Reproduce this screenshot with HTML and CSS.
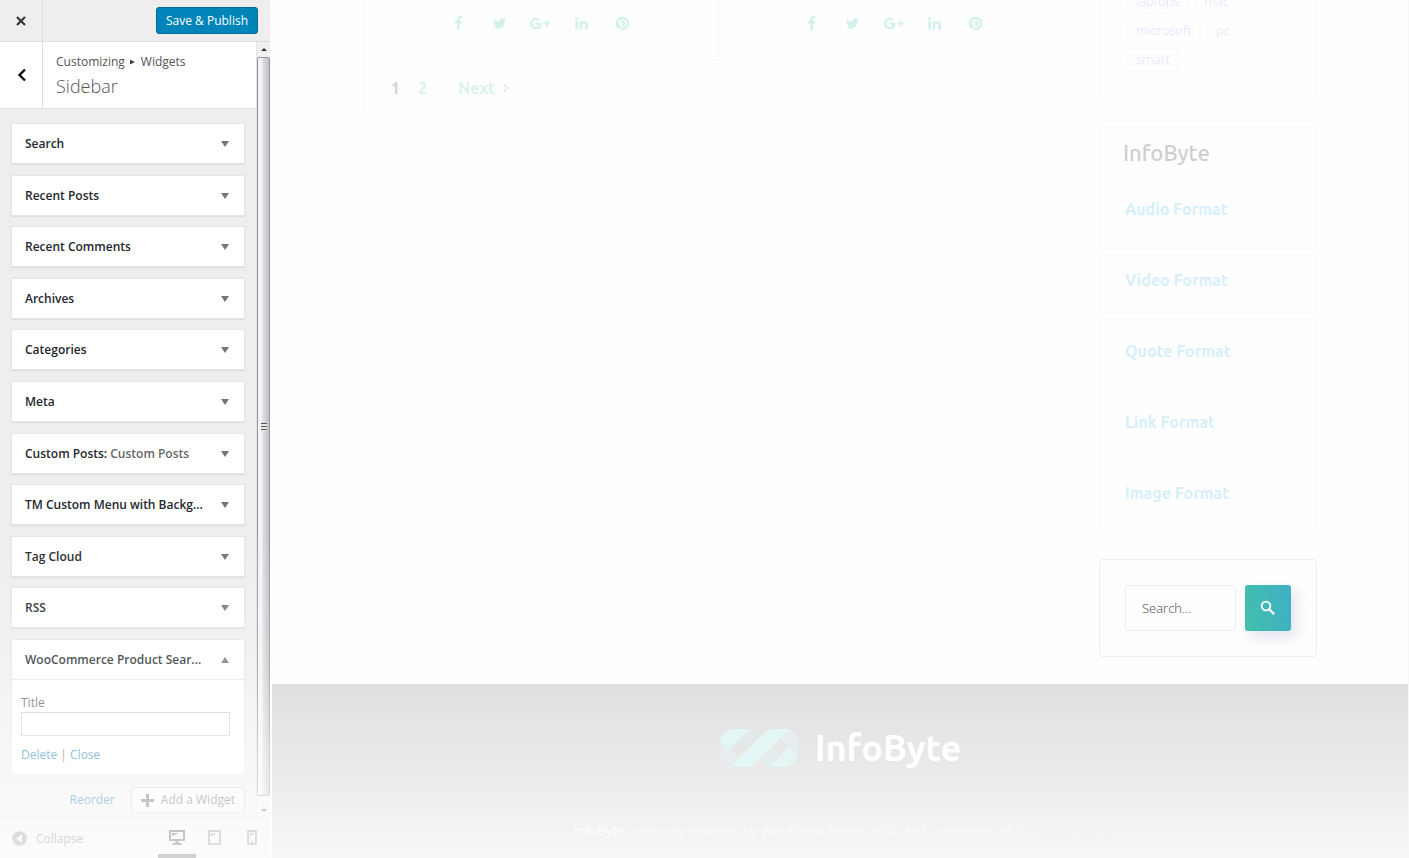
FILE: index.html
```html
<!DOCTYPE html>
<html lang="en">
<head>
<meta charset="utf-8">
<title>Customize: InfoByte</title>
<link rel="stylesheet" href="styles.css">
</head>
<body>
<svg width="0" height="0" class="sprite" aria-hidden="true">
  <symbol id="fb" viewBox="0 0 1792 1792"><path d="M1343 12v264h-157q-86 0-116 36t-30 108v189h293l-39 296h-254v759h-306v-759h-255v-296h255v-218q0-186 104-288.5t277-102.5q147 0 228 12z"/></symbol>
  <symbol id="tw" viewBox="0 0 1792 1792"><path d="M1684 408q-67 98-162 167 1 14 1 42 0 130-38 259.5t-115.5 248.5-184.5 210.5-258 146-323 54.5q-271 0-496-145 35 4 78 4 225 0 401-138-105-2-188-64.5t-114-159.5q33 5 61 5 43 0 85-11-112-23-185.5-111.5t-73.5-205.5v-4q68 38 146 41-66-44-105-115t-39-154q0-88 44-163 121 149 294.5 238.5t371.5 99.5q-8-38-8-74 0-134 94.5-228.5t228.5-94.5q140 0 236 102 109-21 205-78-37 115-142 178 93-10 186-50z"/></symbol>
  <symbol id="gp" viewBox="0 3 24 18"><path d="M7 11v2.4h3.97c-.16 1.03-1.2 3.02-3.97 3.02-2.39 0-4.34-1.98-4.34-4.42S4.61 7.58 7 7.58c1.36 0 2.27.58 2.79 1.08l1.9-1.83C10.47 5.69 8.89 5 7 5c-3.87 0-7 3.13-7 7s3.13 7 7 7c4.04 0 6.72-2.84 6.72-6.84 0-.46-.05-.81-.11-1.16zM24 13h-3v3h-2v-3h-3v-2h3V8h2v3h3z"/></symbol>
  <symbol id="li" viewBox="0 0 1792 1792"><path d="M477 625v991h-330v-991h330zm21-306q1 73-50.5 122t-135.5 49h-2q-82 0-132-49t-50-122q0-74 51.5-122.5t134.5-48.5 133 48.5 51 122.5zm1166 729v568h-329v-530q0-105-40.5-164.5t-126.5-59.5q-63 0-105.5 34.5t-63.5 85.5q-11 30-11 81v553h-329q2-399 2-647t-1-296l-1-48h329v144h-2q20-32 41-56t56.500-52 87-43.500 114.500-15.500q171 0 275 113.500t104 332.500z"/></symbol>
  <symbol id="pi" viewBox="1 1 22 22"><path d="M9.040 21.540c.96.29 1.930.46 2.960.46a10 10 0 0 0 10-10A10 10 0 0 0 12 2 10 10 0 0 0 2 12c0 4.250 2.670 7.900 6.440 9.340-.09-.78-.18-2.070 0-2.960l1.150-4.940s-.29-.58-.29-1.500c0-1.380.86-2.410 1.840-2.410.86 0 1.260.63 1.260 1.440 0 .86-.57 2.090-.86 3.270-.17.98.52 1.840 1.520 1.840 1.780 0 3.160-1.900 3.160-4.580 0-2.400-1.720-4.040-4.190-4.040-2.820 0-4.480 2.100-4.480 4.310 0 .86.28 1.730.74 2.300.09.06.09.14.06.29l-.29 1.090c0 .17-.11.23-.28.11-1.280-.56-2.020-2.380-2.020-3.850 0-3.160 2.240-6.030 6.560-6.030 3.440 0 6.120 2.470 6.120 5.750 0 3.440-2.130 6.200-5.180 6.200-.97 0-1.920-.52-2.260-1.130l-.67 2.370c-.23.86-.86 2.010-1.290 2.700z"/></symbol>
</svg>
<div class="app">
  <aside class="customizer">
    <header class="topbar">
      <button class="close" aria-label="Close"><svg width="12" height="12" viewBox="0 0 12 12"><path d="M2 2l8 8M10 2l-8 8" stroke="#32373c" stroke-width="2.200"/></svg></button>
      <button class="publish">Save &amp; Publish</button>
    </header>
    <div class="panel">
      <div class="controls">
        <div class="section-head">
          <button class="back" aria-label="Back"><svg width="12" height="14" viewBox="0 0 12 14"><path d="M10 1.500L4.500 7L10 12.500" fill="none" stroke="#111" stroke-width="2.400"/></svg></button>
          <div class="section-name">
            <div class="crumbs">Customizing <svg width="6" height="6" viewBox="0 0 6 6"><path d="M0 0.500l5 2.500l-5 2.500z" fill="#444"/></svg> Widgets</div>
            <h1>Sidebar</h1>
          </div>
        </div>
        <div class="widgets">
          <button class="widget"><span>Search</span><i class="arrow"></i></button>
          <button class="widget"><span>Recent Posts</span><i class="arrow"></i></button>
          <button class="widget"><span>Recent Comments</span><i class="arrow"></i></button>
          <button class="widget"><span>Archives</span><i class="arrow"></i></button>
          <button class="widget"><span>Categories</span><i class="arrow"></i></button>
          <button class="widget"><span>Meta</span><i class="arrow"></i></button>
          <button class="widget"><span>Custom Posts: <em>Custom Posts</em></span><i class="arrow"></i></button>
          <button class="widget"><span>TM Custom Menu with Backg...</span><i class="arrow"></i></button>
          <button class="widget"><span>Tag Cloud</span><i class="arrow"></i></button>
          <button class="widget"><span>RSS</span><i class="arrow"></i></button>
          <div class="widget-open">
            <button class="widget"><span>WooCommerce Product Sear...</span><i class="arrow up"></i></button>
            <div class="widget-form">
              <label for="title">Title</label>
              <input id="title" type="text">
              <div class="links"><a href="#">Delete</a> | <a href="#">Close</a></div>
            </div>
          </div>
        </div>
        <div class="actions">
          <a href="#">Reorder</a>
          <button class="add"><svg width="13" height="13" viewBox="0 0 13 13"><path d="M6.500 0v13M0 6.500h13" stroke="#555" stroke-width="3"/></svg>Add a Widget</button>
        </div>
      </div>
      <div class="scrollbar">
        <div class="scroll-end"><i class="tiny up"></i></div>
        <div class="thumb"><i class="grip"></i></div>
        <div class="scroll-end"><i class="tiny"></i></div>
      </div>
    </div>
    <footer class="bottombar">
      <button class="collapse"><svg width="15" height="15" viewBox="0 0 15 15"><circle cx="7.500" cy="7.500" r="7.300" fill="#72777c"/><path d="M10 3.500v8L4 7.500z" fill="#eee"/></svg>Collapse</button>
      <div class="devices">
        <button class="device active" aria-label="Desktop"><svg width="16" height="15" viewBox="0 0 16 15"><path d="M1 1h14v9H1z" fill="none" stroke="#191e23" stroke-width="2"/><path d="M3 3h7L3 6zM6.500 11h3v2h3v2h-9v-2h3z" fill="#191e23"/></svg></button>
        <button class="device" aria-label="Tablet"><svg width="13" height="15" viewBox="0 0 13 15"><path d="M1 1h11v13H1z" fill="none" stroke="#72777c" stroke-width="2"/><path d="M3 3h5L3 7z" fill="#72777c"/></svg></button>
        <button class="device" aria-label="Phone"><svg width="10" height="15" viewBox="0 0 10 15"><path d="M1 1h8v13H1z" fill="none" stroke="#72777c" stroke-width="2"/><path d="M3 3h4L3 7zM4 11h2v2H4z" fill="#72777c"/></svg></button>
      </div>
    </footer>
    <div class="fade"></div>
  </aside>
  <main class="preview">
    <div class="container">
      <section class="posts">
        <div class="post-row">
          <div class="post">
            <i class="glow"></i>
            <a href="#" aria-label="Facebook"><svg><use href="#fb"/></svg></a><a href="#" aria-label="Twitter"><svg><use href="#tw"/></svg></a><a href="#" aria-label="Google Plus"><svg class="wide"><use href="#gp"/></svg></a><a href="#" aria-label="LinkedIn"><svg><use href="#li"/></svg></a><a href="#" aria-label="Pinterest"><svg><use href="#pi"/></svg></a>
          </div>
          <div class="post">
            <i class="glow"></i>
            <a href="#" aria-label="Facebook"><svg><use href="#fb"/></svg></a><a href="#" aria-label="Twitter"><svg><use href="#tw"/></svg></a><a href="#" aria-label="Google Plus"><svg class="wide"><use href="#gp"/></svg></a><a href="#" aria-label="LinkedIn"><svg><use href="#li"/></svg></a><a href="#" aria-label="Pinterest"><svg><use href="#pi"/></svg></a>
          </div>
        </div>
        <nav class="pagination">
          <span>1</span><a href="#">2</a>
          <a href="#" class="next">Next <svg width="6" height="8" viewBox="0 0 6 8"><path d="M1 0.500L4.500 4L1 7.500" fill="none" stroke="#d3f1ec" stroke-width="1.500"/></svg></a>
        </nav>
      </section>
      <aside class="sidebar">
        <div class="card tags">
          <a href="#">laptops</a><a href="#">mac</a><a href="#">microsoft</a><a href="#">pc</a><a href="#">smart</a>
        </div>
        <div class="card">
          <h2>InfoByte</h2>
          <a class="format" href="#">Audio Format</a>
          <a class="format" href="#">Video Format</a>
          <a class="format" href="#">Quote Format</a>
          <a class="format" href="#">Link Format</a>
          <a class="format" href="#">Image Format</a>
        </div>
        <form class="card search">
          <input type="search" placeholder="Search..." aria-label="Search">
          <button type="button" aria-label="Search"><svg width="16" height="16" viewBox="0 0 16 16"><circle cx="6" cy="6" r="4.300" fill="none" stroke="#fff" stroke-width="1.800"/><path d="M9.200 9.200l5 5" stroke="#fff" stroke-width="2.200"/></svg></button>
        </form>
      </aside>
    </div>
    <footer class="site-footer">
      <div class="brand">
        <svg width="80" height="40" viewBox="0 0 80 40">
          <path d="M5 6Q10 1 14 1H31L10 22L1 12Q1 9 5 6Z" fill="#e4f6f5"/>
          <path d="M1 12L18 29L9 38Q1 34 1 28Z" fill="#e6eeef"/>
          <path d="M31 1Q35 2 38 8L27 21L18 13Z" fill="#e3eaec"/>
          <path d="M75 34Q70 39 66 39H49L70 18L79 28Q79 31 75 34Z" fill="#e6f6f5"/>
          <path d="M79 28L62 11L71 2Q79 6 79 12Z" fill="#e6eeef"/>
          <path d="M49 39Q45 38 42 32L53 19L62 27Z" fill="#e5ecee"/>
          <path d="M53 1H71L33 39H9Q13 37 17 33L45 5Q49 1 53 1Z" fill="#e4f6f5"/>
        </svg>
        <span>InfoByte</span>
      </div>
      <p><b>InfoByte</b> is proudly powered by WordPress Entries (RSS) and Comments (RSS) <a href="#">Privacy Policy</a></p>
    </footer>
  </main>
</div>
</body>
</html>
```
FILE: styles.css
```css
* { box-sizing: border-box; }
body { margin: 0; font: 12px/18px "Open Sans", sans-serif; color: #555; background: #fefefe; }
button, input { font: inherit; color: inherit; margin: 0; padding: 0; border: 0; background: none; }
a { text-decoration: none; color: #0073aa; }
svg { display: block; flex: none; }
.sprite { position: absolute; }
.app { display: flex; height: 100vh; overflow: hidden; }

.customizer { position: relative; width: 272px; flex: none; display: flex; flex-direction: column; background: #eee; border-right: 2px solid #fefefe; }
.topbar { display: flex; height: 42px; flex: none; align-items: center; justify-content: space-between; padding-right: 12px; border-bottom: 1px solid #ddd; }
.close { display: grid; place-items: center; width: 43px; height: 41px; border-right: 1px solid #ddd; }
.publish { height: 27px; padding: 0 9px; border: 1px solid #006799; border-radius: 3px; background: #0085ba; color: #fff; }
.panel { display: flex; flex: 1; min-height: 0; }
.controls { display: flex; flex: 1; min-width: 0; flex-direction: column; }
.section-head { display: flex; height: 67px; flex: none; background: #fff; border-bottom: 1px solid #ddd; }
.back { display: grid; place-items: center; width: 43px; border-right: 1px solid #ddd; }
.section-name { padding: 11px 13px; }
.crumbs { display: flex; align-items: center; gap: 5px; }
.section-name h1 { margin: 3px 0 0; font-size: 18px; line-height: 24px; font-weight: 300; }
.widgets { display: flex; flex: 1; flex-direction: column; justify-content: space-between; padding: 14px 11px 0; }
.widget { display: flex; width: 100%; height: 41px; align-items: center; justify-content: space-between; padding: 1px 15px 0 13px; background: #fff; border: 1px solid #e5e5e5; box-shadow: 0 1px 1px rgba(0, 0, 0, .06); text-align: left; font-weight: 600; color: #23282d; }
.widget span { white-space: nowrap; }
.widget em { font-style: normal; color: #666; }
.arrow { border: 4px solid transparent; border-top: 6px solid #72777c; border-bottom: 0; }
.arrow.up { border-top: 0; border-bottom: 6px solid #72777c; }
.widget-form { display: flex; flex-direction: column; height: 95px; padding: 14px 14px 0 9px; background: #fff; border: 1px solid #e5e5e5; border-top: 0; }
.widget-form input { height: 24px; border: 1px solid #ccc; background: #fff; }
.links { margin-top: 10px; }
.actions { display: flex; align-items: center; justify-content: flex-end; gap: 16px; padding: 12px 11px 3px; }
.add { display: flex; gap: 7px; height: 26px; padding: 0 9px; align-items: center; border: 1px solid #ccc; border-radius: 3px; background: #f7f7f7; white-space: nowrap; }
.scrollbar { display: flex; flex-direction: column; width: 14px; background: #f0f0f2; border-left: 1px solid #e2e2e2; }
.scroll-end { display: grid; place-items: center; height: 15px; }
.scroll-end:last-child { height: 20px; padding-top: 8px; }
.tiny { border: 3px solid transparent; border-top: 3px solid #555; border-bottom: 0; }
.tiny.up { border-top: 0; border-bottom: 3px solid #333; }
.thumb { display: grid; place-items: center; flex: 1; border: 1px solid #98989c; border-radius: 2px; background: linear-gradient(90deg, #f4f4f6 30%, #dcdce0 50%, #c0c0c6); }
.grip { width: 6px; height: 8px; background: repeating-linear-gradient(#555 0 1px, #e8e8e8 1px 3px); }
.bottombar { display: flex; height: 42px; flex: none; justify-content: space-between; border-top: 1px solid #ddd; }
.collapse { display: flex; align-items: center; gap: 9px; padding: 2px 0 0 12px; }
.devices { display: flex; }
.device { display: grid; place-items: center; width: 37px; border-bottom: 4px solid transparent; padding-top: 4px; }
.device.active { border-color: #191e23; width: 38px; }
.fade { position: absolute; inset: 62% 0 0; pointer-events: none; background: linear-gradient(rgba(255, 255, 255, 0), rgba(255, 255, 255, .22) 40%, rgba(255, 255, 255, .55) 68%, rgba(255, 255, 255, .8)); }

.preview { display: flex; flex: 1; flex-direction: column; min-width: 0; border-right: 1px solid #f7f7f7; }
.container { display: flex; gap: 28px; align-items: flex-start; width: 100%; max-width: 954px; margin: 0 auto; }
.posts { flex: 1; border: 1px solid #fafafa; border-top: 0; border-radius: 0 0 3px 3px; }
.post-row { display: flex; border-bottom: 1px solid #fafafa; }
.post { position: relative; display: flex; flex: 1; gap: 21px; justify-content: center; align-items: center; height: 60px; padding-bottom: 14px; }
.post + .post { border-left: 1px solid #fafafa; }
.post a { display: grid; place-items: center; width: 20px; }
.post svg { width: 15px; height: 15px; fill: #d3f1ec; }
.post svg.wide { width: 20px; height: 15px; }
.glow { position: absolute; top: 0; width: 90px; height: 1px; box-shadow: 0 0 8px 2px #f9f9f9; }
.pagination, h2, .format, .brand { font-family: Ubuntu, "Noto Sans", sans-serif; font-weight: 500; }
.pagination { display: flex; align-items: center; gap: 18px; height: 53px; padding-left: 27px; font-size: 16px; font-weight: 700; color: #d6d2d2; }
.pagination a { display: flex; align-items: center; gap: 8px; color: #d8f2ee; }
.pagination .next { margin-left: 13px; }
.sidebar { display: flex; flex-direction: column; gap: 27px; width: 218px; }
.card { border: 1px solid #fafafa; border-radius: 3px; }
.tags { display: flex; flex-wrap: wrap; align-content: flex-start; gap: 5px 7px; margin-top: -37px; padding: 26px 60px 27px 27px; }
.tags a { height: 24px; padding: 0 8px; border: 1px solid #f9f9fb; border-radius: 3px; font-size: 13px; line-height: 21px; font-weight: 300; color: #dfe1fd; }
h2 { margin: 0; padding: 10px 23px; font-size: 22px; line-height: 29px; color: #cfcfcf; }
.format { display: block; height: 71px; padding: 20px 25px; border-top: 1px solid #fafafa; font-size: 16px; line-height: 23px; font-weight: 700; color: #d6eff9; }
.format:last-child { height: 70px; }
.search { display: flex; gap: 9px; padding: 25px; border-color: #eee; }
.search input { flex: 1; min-width: 0; height: 46px; padding: 0 16px; border: 1px solid #eee; border-radius: 3px; font-size: 13px; font-weight: 300; appearance: none; }
.search input::placeholder { color: #444; opacity: 1; }
.search button { display: grid; place-items: center; width: 46px; border-radius: 3px; background: linear-gradient(80deg, #42c0ab, #3fb0c6); box-shadow: 5px 6px 14px #e2e2f0; }
.site-footer { display: flex; flex: 1; flex-direction: column; align-items: center; margin-top: 27px; padding-top: 44px; background: linear-gradient(#dee0df, #e7e7e7 36%, #f7f7f7); }
.brand { display: flex; align-items: center; gap: 16px; height: 40px; font-size: 36px; font-weight: 700; color: #fff; }
.site-footer p { margin: 51px 0 0; font-size: 13px; line-height: 22px; font-weight: 300; color: #fff; }
.site-footer b { font-weight: 400; color: #fff; }
.site-footer a { color: #eaf9f6; }
```
